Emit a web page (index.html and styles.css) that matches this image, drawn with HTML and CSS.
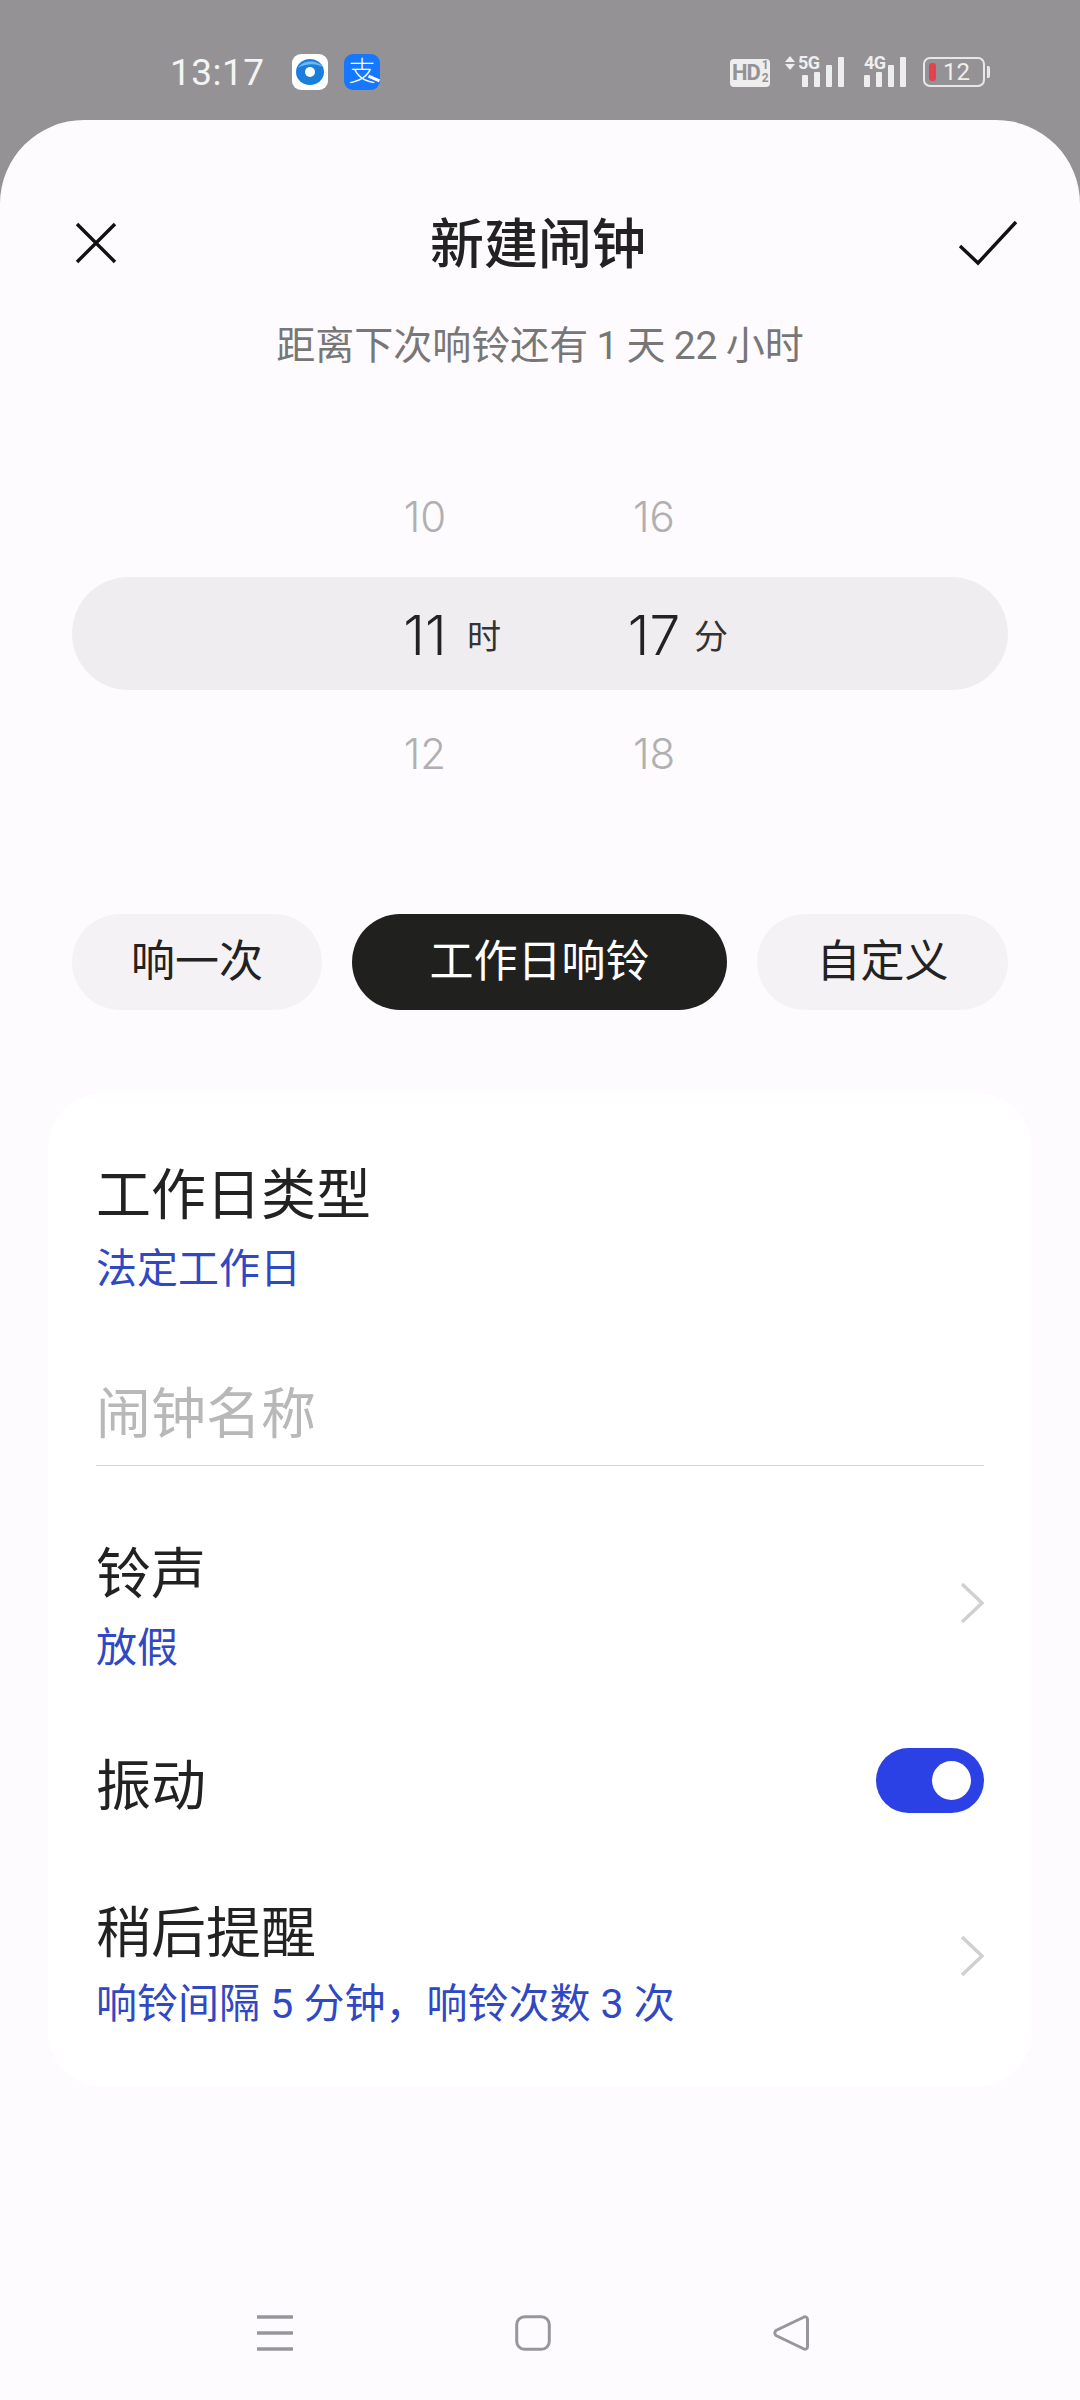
FILE: index.html
```html
<!DOCTYPE html>
<html>
<head>
    <title>新建闹钟</title>
    <link rel="stylesheet" href="styles.css">
</head>
<body>
    <!-- 状态栏 -->
    <div class="status-bar">
        <div class="status-left">
            <span class="clock">13:17</span>
            <span class="app-icon app-white">
                <svg width="36" height="36" viewBox="0 0 36 36">
                    <ellipse cx="18" cy="18" rx="14" ry="13" fill="#1a7fdc"/>
                    <path d="M6 14C12 5 26 6 32 14C26 9 14 9 6 14Z" fill="#6db9f2"/>
                    <circle cx="18" cy="18" r="5" fill="#fff"/>
                </svg>
            </span>
            <span class="app-icon app-blue">支</span>
        </div>
        <div class="status-right">
            <span class="hd">HD<span class="hd-frac"><i>1</i><i>2</i></span></span>
            <span class="signal">
                <span class="arrows"><i class="up"></i><i class="down"></i></span>
                <span class="net-label">5G</span>
                <span class="bars"><i class="b1"></i><i class="b2"></i><i class="b3"></i><i class="b4"></i></span>
            </span>
            <span class="signal signal-4g">
                <span class="net-label">4G</span>
                <span class="bars"><i class="b1"></i><i class="b2"></i><i class="b3"></i><i class="b4"></i></span>
            </span>
            <span class="battery">
                <span class="battery-body"><i class="battery-level"></i><span>12</span></span>
                <i class="battery-tip"></i>
            </span>
        </div>
    </div>

    <div class="sheet">
        <div class="header">
            <svg class="header-icon" width="44" height="44" viewBox="0 0 44 44">
                <path d="M3 3L41 41M41 3L3 41" stroke="#111" stroke-width="3.4" fill="none"/>
            </svg>
            <div class="title">新建闹钟</div>
            <svg class="header-icon" width="60" height="46" viewBox="0 0 60 46">
                <path d="M2 26L20 43L58 2" stroke="#111" stroke-width="3.4" fill="none"/>
            </svg>
        </div>
        <div class="subtitle">距离下次响铃还有 1 天 22 小时</div>

        <!-- 时间选择 -->
        <div class="picker">
            <div class="wheel-row">
                <span class="num num-h">10</span>
                <span class="num num-m">16</span>
            </div>
            <div class="wheel-row wheel-active">
                <span class="num num-h">11</span>
                <span class="unit unit-h">时</span>
                <span class="num num-m">17</span>
                <span class="unit unit-m">分</span>
            </div>
            <div class="wheel-row">
                <span class="num num-h">12</span>
                <span class="num num-m">18</span>
            </div>
        </div>

        <div class="chips">
            <div class="chip chip-once">响一次</div>
            <div class="chip chip-work">工作日响铃</div>
            <div class="chip chip-custom">自定义</div>
        </div>

        <div class="card">
            <div class="item item-type">
                <div class="item-text">
                    <div class="item-title">工作日类型</div>
                    <div class="item-sub">法定工作日</div>
                </div>
            </div>
            <div class="name-field">闹钟名称</div>
            <div class="item item-ring">
                <div class="item-text">
                    <div class="item-title">铃声</div>
                    <div class="item-sub">放假</div>
                </div>
                <svg class="chevron" width="24" height="42" viewBox="0 0 24 42">
                    <path d="M2 2L22 21L2 40" stroke="#d0d0d0" stroke-width="3.4" fill="none"/>
                </svg>
            </div>
            <div class="item item-vibrate">
                <div class="item-title">振动</div>
                <div class="toggle"><i class="toggle-knob"></i></div>
            </div>
            <div class="item item-snooze">
                <div class="item-text">
                    <div class="item-title">稍后提醒</div>
                    <div class="item-sub">响铃间隔 5 分钟，响铃次数 3 次</div>
                </div>
                <svg class="chevron" width="24" height="42" viewBox="0 0 24 42">
                    <path d="M2 2L22 21L2 40" stroke="#d0d0d0" stroke-width="3.4" fill="none"/>
                </svg>
            </div>
        </div>

        <!-- 底部导航 -->
        <div class="nav">
            <svg width="36" height="36" viewBox="0 0 36 36">
                <path d="M0 2H36M0 18H36M0 34H36" stroke="#98969a" stroke-width="3.4" fill="none"/>
            </svg>
            <svg width="36" height="36" viewBox="0 0 36 36">
                <rect x="1.7" y="1.7" width="32.6" height="32.6" rx="8" stroke="#98969a" stroke-width="3" fill="none"/>
            </svg>
            <svg width="36" height="36" viewBox="0 0 36 36">
                <path d="M30 2.5C32.5 1 34.5 2 34.5 4.5V31.5C34.5 34 32.5 35 30 33.5L3 20.5C1.5 19.5 1.5 16.5 3 15.5Z" stroke="#98969a" stroke-width="3" fill="none"/>
            </svg>
        </div>
    </div>
</body>
</html>
```

FILE: styles.css
```css
* {
    box-sizing: border-box;
}
body {
    margin: 0;
    width: 1080px;
    height: 2400px;
    overflow: hidden;
    background-color: #949295;
    font-family: "Roboto", "Noto Sans CJK SC", sans-serif;
    color: #222;
}
i {
    display: block;
    font-style: normal;
}

/* 状态栏 */
.status-bar {
    height: 120px;
    padding: 54px 90px 0 170px;
    display: flex;
    justify-content: space-between;
    align-items: flex-start;
    color: #f0f0f0;
}
.status-left {
    display: flex;
    align-items: center;
    height: 36px;
}
.clock {
    width: 122px;
    font-size: 37px;
    letter-spacing: 0.5px;
    color: #f4f4f4;
}
.app-icon {
    width: 36px;
    height: 36px;
    border-radius: 9px;
    margin-right: 16px;
    display: flex;
    align-items: center;
    justify-content: center;
}
.app-white {
    background-color: #fff;
}
.app-blue {
    position: relative;
    background-color: #1677ff;
    color: #fff;
    font-size: 27px;
    line-height: 36px;
    font-weight: 300;
}
.app-blue::after {
    content: "";
    position: absolute;
    right: 0;
    bottom: 10px;
    width: 12px;
    height: 3px;
    background-color: #fff;
    transform: rotate(24deg);
}
.status-right {
    display: flex;
    align-items: flex-end;
    height: 34px;
    margin-top: -1px;
}
.hd {
    width: 40px;
    height: 28px;
    margin-right: 15px;
    padding-left: 2px;
    border-radius: 4px;
    background-color: #eee;
    color: #949295;
    font-size: 22px;
    font-weight: 700;
    letter-spacing: -1px;
    line-height: 28px;
    display: flex;
}
.hd-frac {
    font-size: 12px;
    line-height: 13px;
    margin-left: 2px;
}
.signal {
    position: relative;
    display: flex;
    align-items: flex-end;
    width: 59px;
    height: 32px;
    margin-right: 20px;
}
.signal-4g {
    margin-right: 17px;
    width: 42px;
}
.arrows {
    width: 10px;
    margin-right: 7px;
    align-self: flex-start;
    padding-top: 1px;
}
.up {
    width: 0;
    height: 0;
    border-left: 5px solid transparent;
    border-right: 5px solid transparent;
    border-bottom: 6px solid #eee;
    margin-bottom: 2px;
}
.down {
    width: 0;
    height: 0;
    border-left: 5px solid transparent;
    border-right: 5px solid transparent;
    border-top: 6px solid #eee;
}
.net-label {
    position: absolute;
    top: -1px;
    left: 13px;
    font-size: 18px;
    font-weight: 700;
    letter-spacing: -0.5px;
    line-height: 17px;
    color: #eee;
}
.signal-4g .net-label {
    left: 0;
}
.bars {
    display: flex;
    align-items: flex-end;
    gap: 6px;
}
.bars i {
    width: 6px;
    background-color: #eee;
    border-radius: 1px;
}
.b1 { height: 12px; }
.b2 { height: 15px; }
.b3 { height: 22px; }
.b4 { height: 30px; }

.battery {
    display: flex;
    align-items: center;
    height: 30px;
}
.battery-body {
    width: 62px;
    height: 30px;
    padding-left: 4px;
    border: 2px solid #e8e8e8;
    border-radius: 7px;
    display: flex;
    align-items: center;
    gap: 7px;
    font-size: 24px;
    color: #eee;
}
.battery-level {
    width: 7px;
    height: 18px;
    border-radius: 3px;
    background-color: #e5404f;
}
.battery-tip {
    width: 3px;
    height: 12px;
    margin-left: 2px;
    background-color: #e8e8e8;
    border-radius: 0 2px 2px 0;
}

/* 主体 */
.sheet {
    height: 2280px;
    background-color: #fefbfe;
    border-radius: 84px 84px 0 0;
    display: flex;
    flex-direction: column;
}
.header {
    height: 163px;
    padding: 83px 62px 0 74px;
    display: flex;
    justify-content: space-between;
    align-items: center;
}
.title {
    font-size: 54px;
    line-height: 76px;
    padding-top: 6px;
    font-weight: 500;
    color: #222;
}
.subtitle {
    margin-top: 33px;
    text-align: center;
    font-size: 39px;
    line-height: 60px;
    word-spacing: -1.5px;
    color: #777;
}

/* 时间选择 */
.picker {
    margin: 77px 72px 0;
}
.wheel-row {
    height: 124px;
    padding-top: 2px;
    display: grid;
    grid-template-columns: 308px 90px 139px 90px 1fr;
    align-items: center;
    font-size: 42px;
    color: #b0b0b0;
}
.wheel-active {
    height: 113px;
    background-color: #f0edf0;
    border-radius: 57px;
    color: #222;
    font-size: 55px;
}
.num {
    font-family: "Inter", "Roboto", sans-serif;
    text-align: center;
    font-weight: 300;
}
.num-h {
    grid-column: 2;
}
.num-m {
    grid-column: 4;
}
.unit {
    font-size: 34px;
    color: #333;
}
.unit-h {
    grid-column: 3;
    margin-left: -3px;
}
.unit-m {
    grid-column: 5;
    margin-left: -5px;
}

/* 响铃方式 */
.chips {
    margin: 100px 72px 0;
    display: flex;
    gap: 30px;
}
.chip {
    height: 96px;
    line-height: 97px;
    text-align: center;
    font-size: 44px;
    border-radius: 48px;
    background-color: #f5f2f5;
    color: #222;
}
.chip-once {
    width: 250px;
}
.chip-work {
    width: 375px;
    background-color: #20211f;
    color: #fff;
}
.chip-custom {
    flex: 1;
}

/* 设置卡片 */
.card {
    margin: 83px 48px 0;
    padding: 64px 48px 56px;
    background-color: #fff;
    border-radius: 56px;
}
.item {
    display: flex;
    justify-content: space-between;
    align-items: center;
}
.item-title {
    font-size: 55px;
    line-height: 77px;
    color: #222;
}
.item-sub {
    margin-top: 8px;
    font-size: 41px;
    line-height: 54px;
    color: #3048c4;
}
.name-field {
    margin-top: 69px;
    height: 101px;
    line-height: 98px;
    font-size: 55px;
    color: #b8b8b8;
    border-bottom: 1px solid #d4d4d4;
}
.item-ring {
    margin-top: 70px;
}
.item-ring .chevron {
    margin-bottom: 6px;
}
.item-vibrate {
    margin-top: 73px;
}
.item-snooze {
    margin-top: 70px;
}
.item-snooze .item-sub {
    margin-top: 5px;
}
.item-snooze .chevron {
    margin-bottom: 15px;
}
.toggle {
    width: 108px;
    height: 65px;
    margin-bottom: 12px;
    border-radius: 33px;
    background-color: #2b41e6;
    display: flex;
    align-items: center;
    justify-content: flex-end;
    padding-right: 13px;
}
.toggle-knob {
    width: 39px;
    height: 39px;
    border-radius: 50%;
    background-color: #fff;
}

/* 底部导航 */
.nav {
    margin-top: auto;
    padding: 0 14px 49px 0;
    display: flex;
    justify-content: center;
    gap: 222px;
}
```
